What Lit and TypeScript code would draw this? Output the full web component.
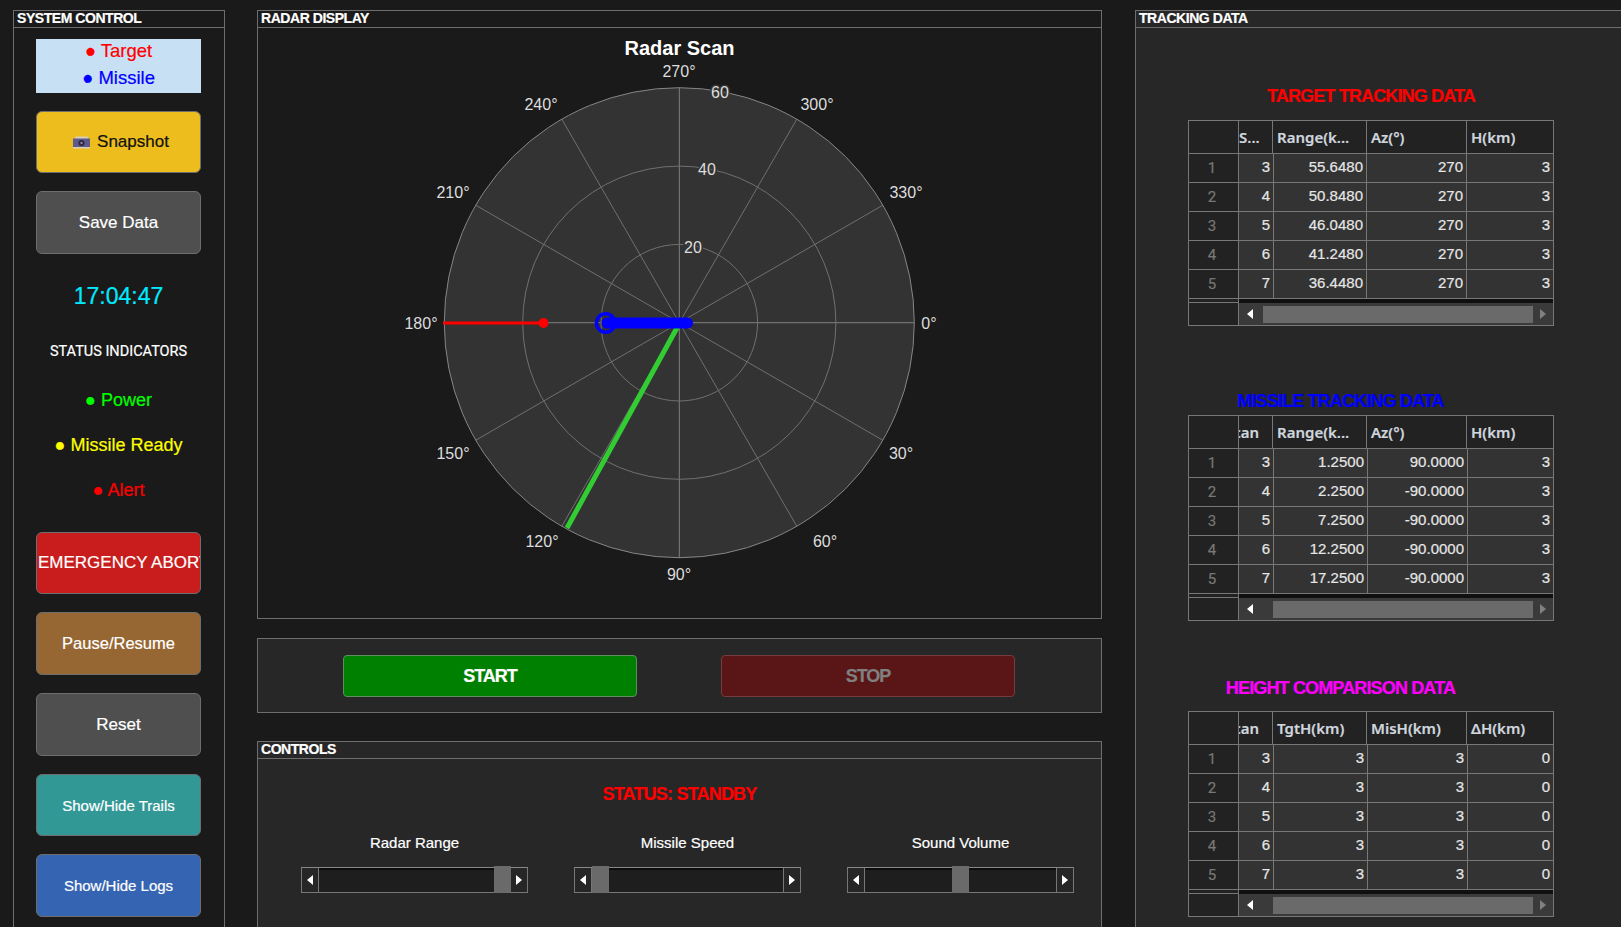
import { LitElement, html, css, svg } from "lit";
import { customElement } from "lit/decorators.js";

const SANS = css`"Liberation Sans", Arial, sans-serif`;

interface TableData {
  cls: string;
  title: string;
  head: string[];
  clipScan: boolean;
  rows: string[][];
}

const SCANS = ["3", "4", "5", "6", "7"];

const TABLES: TableData[] = [
  {
    cls: "target",
    title: "TARGET TRACKING DATA",
    head: ["S...", "Range(k...", "Az(°)", "H(km)"],
    clipScan: false,
    rows: [
      ["55.6480", "270", "3"],
      ["50.8480", "270", "3"],
      ["46.0480", "270", "3"],
      ["41.2480", "270", "3"],
      ["36.4480", "270", "3"],
    ],
  },
  {
    cls: "missile",
    title: "MISSILE TRACKING DATA",
    head: ["Scan", "Range(k...", "Az(°)", "H(km)"],
    clipScan: true,
    rows: [
      ["1.2500", "90.0000", "3"],
      ["2.2500", "-90.0000", "3"],
      ["7.2500", "-90.0000", "3"],
      ["12.2500", "-90.0000", "3"],
      ["17.2500", "-90.0000", "3"],
    ],
  },
  {
    cls: "height",
    title: "HEIGHT COMPARISON DATA",
    head: ["Scan", "TgtH(km)", "MisH(km)", "ΔH(km)"],
    clipScan: true,
    rows: [
      ["3", "3", "0"],
      ["3", "3", "0"],
      ["3", "3", "0"],
      ["3", "3", "0"],
      ["3", "3", "0"],
    ],
  },
];

const SLIDERS = [
  { label: "Radar Range", pos: 175 },
  { label: "Missile Speed", pos: 0 },
  { label: "Sound Volume", pos: 87 },
];

// page coordinates, the svg viewBox is the panel's inner box
const CX = 679.3;
const CY = 322.7;
const RINGS = [78.3, 156.6];
const OUTER = 235;

const ANGLE_LABELS: [string, number, number][] = [
  ["270°", 679, 71],
  ["240°", 541, 104],
  ["300°", 817, 104],
  ["210°", 453, 192],
  ["330°", 906, 192],
  ["180°", 421, 323],
  ["0°", 929, 323],
  ["150°", 453, 453],
  ["30°", 901, 453],
  ["120°", 542, 541],
  ["60°", 825, 541],
  ["90°", 679, 574],
];

const RANGE_LABELS: [string, number, number][] = [
  ["20", 693, 247],
  ["40", 707, 169],
  ["60", 720, 92],
];

@customElement("app-root")
export class AppRoot extends LitElement {
  static styles = css`
    :host {
      display: block;
      height: 927px;
      overflow: hidden;
      background: #1a1a1a;
      font-family: ${SANS};
      color: #fff;
      -webkit-text-stroke: 0.2px;
    }
    .page {
      display: flex;
      gap: 32px;
      width: 1750px;
      height: 1000px;
      padding: 10px 0 0 13px;
      box-sizing: border-box;
    }
    .panel {
      flex: none;
      border: 1px solid #6e6e6e;
      box-sizing: border-box;
    }
    .panel-title {
      height: 16px;
      line-height: 15px;
      padding-left: 3px;
      border-bottom: 1px solid #6e6e6e;
      font-size: 14px;
      font-weight: 700;
      letter-spacing: -0.45px;
      white-space: nowrap;
    }
    .dark {
      background: #272727;
    }

    /* sidebar */
    .side {
      width: 212px;
      padding-right: 1px;
      display: flex;
      flex-direction: column;
      align-items: center;
    }
    .side .panel-title {
      align-self: stretch;
      margin-right: -1px;
    }
    .legend {
      width: 165px;
      height: 54px;
      margin-top: 11px;
      background: #c8e0f4;
      font-size: 18.5px;
      line-height: 27px;
      text-align: center;
    }
    .legend div {
      position: relative;
      top: -2px;
    }
    .red {
      color: #f00;
    }
    .blue {
      color: #00f;
    }
    .side-btn {
      width: 165px;
      height: 63px;
      margin-top: 18px;
      padding: 0 1px;
      box-sizing: border-box;
      display: flex;
      align-items: center;
      justify-content: center;
      gap: 7px;
      border: 1px solid #6e6e6e;
      border-radius: 6px;
      font: 17px ${SANS};
      color: #fff;
      white-space: nowrap;
      overflow: hidden;
    }
    .snapshot {
      height: 62px;
      padding-left: 6px;
      background: #ecbd1c;
      color: #111;
    }
    .grey {
      background: #4f4f4f;
    }
    .abort {
      height: 62px;
      margin-top: 0;
      background: #c91c1c;
      justify-content: flex-start;
    }
    .abort span {
      flex: none;
    }
    .pause {
      background: #966733;
      font-size: 16.5px;
    }
    .trails {
      height: 62px;
      background: #329896;
      font-size: 15px;
    }
    .logs {
      background: #3565b2;
      font-size: 15px;
    }
    .clock {
      height: 48px;
      line-height: 48px;
      margin-top: 18px;
      color: #00eaff;
      font-size: 23px;
    }
    .status-head {
      height: 26px;
      margin-top: 19px;
      font: 14.5px / 26px Roboto, sans-serif;
    }
    .indicators {
      margin-top: 13px;
      margin-bottom: 19px;
      text-align: center;
      font-size: 18px;
      line-height: 45px;
    }
    .green {
      color: #0f0;
    }
    .yellow {
      color: #ff0;
    }

    /* middle column */
    .middle {
      flex: none;
      width: 845px;
      margin-right: 1px;
      display: flex;
      flex-direction: column;
    }
    .radar {
      height: 609px;
    }
    .radar svg {
      display: block;
      -webkit-text-stroke: 0;
    }
    .chart-title {
      font: 700 20px ${SANS};
      fill: #fff;
      text-anchor: middle;
    }
    .angle,
    .range {
      font: 16px ${SANS};
      fill: #ddd;
      text-anchor: middle;
      dominant-baseline: central;
    }
    .range {
      paint-order: stroke;
      stroke: #333;
      stroke-width: 3px;
    }
    .disc {
      fill: #333;
    }
    .grid {
      fill: none;
      stroke: #707070;
      stroke-width: 1;
    }
    .axis {
      stroke: #808080;
    }
    .rim {
      fill: none;
      stroke: #868686;
      stroke-width: 1;
    }
    .run-bar {
      height: 75px;
      margin-top: 19px;
      padding: 16px 86px 0 85px;
      display: flex;
      justify-content: space-between;
    }
    .run-btn {
      width: 294px;
      height: 42px;
      box-sizing: border-box;
      display: flex;
      align-items: center;
      justify-content: center;
      border-radius: 4px;
      font-size: 18px;
      font-weight: 700;
      letter-spacing: -1px;
    }
    .start {
      background: #008000;
      border: 1px solid #5f8f5f;
      color: #fff;
    }
    .stop {
      background: #5a1616;
      border: 1px solid #743c3c;
      color: #808080;
    }
    .controls {
      flex: 1;
      margin-top: 28px;
    }
    .status {
      margin-top: 24px;
      height: 24px;
      line-height: 23px;
      text-align: center;
      color: #f00;
      font-size: 18px;
      font-weight: 700;
      letter-spacing: -0.8px;
    }
    .slider-row {
      display: grid;
      grid-template-columns: repeat(3, 227px);
      column-gap: 46px;
      padding: 26px 0 0 43px;
    }
    .slider-label {
      height: 19px;
      line-height: 20px;
      overflow: hidden;
      text-align: center;
      font-size: 15px;
    }
    .slider {
      position: relative;
      height: 26px;
      margin-top: 15px;
      display: flex;
      justify-content: space-between;
      box-sizing: border-box;
      border: 1px solid #777;
      border-top-color: #888;
      background: #1e1e1e;
      box-shadow: inset 0 2px 0 #0c0c0c;
    }
    .slider-end {
      width: 16px;
      display: flex;
      align-items: center;
      justify-content: center;
      background: #262626;
      border-right: 1px solid #777;
    }
    .slider-end.right {
      border-right: 0;
      border-left: 1px solid #777;
    }
    .thumb {
      position: absolute;
      top: -2px;
      bottom: -1px;
      width: 17px;
      margin-left: 17px;
      background: #6a6a6a;
    }
    .arrow-l,
    .arrow-r {
      width: 0;
      height: 0;
      border-top: 5px solid transparent;
      border-bottom: 5px solid transparent;
    }
    .arrow-l {
      border-right: 6px solid #fff;
    }
    .arrow-r {
      border-left: 6px solid #fff;
    }
    .arrow-r.dim {
      border-left-color: #808080;
    }

    /* tracking column */
    .tracking {
      width: 600px;
    }
    .table-title {
      height: 24px;
      line-height: 26px;
      width: 366px;
      margin-left: 52px;
      text-align: center;
      font-size: 18px;
      font-weight: 700;
      letter-spacing: -0.85px;
      white-space: nowrap;
    }
    .table-title.target {
      margin-top: 55px;
      color: #f00;
    }
    .table-title.missile {
      margin-top: 62px;
      padding-right: 61px;
      box-sizing: border-box;
      color: #00f;
    }
    .table-title.height {
      margin-top: 54px;
      padding-right: 61px;
      box-sizing: border-box;
      color: #f0f;
    }
    .table {
      width: 366px;
      margin-left: 52px;
      box-sizing: border-box;
      border: 1px solid #777;
      background: #333;
    }
    .table.target {
      margin-top: 13px;
    }
    .table.missile {
      margin-top: 3px;
    }
    .table.height {
      margin-top: 12px;
    }
    .thead,
    .trow {
      display: grid;
      border-bottom: 1px solid #777;
      box-sizing: border-box;
    }
    .thead {
      grid-template-columns: 50px 34px 94px 100px 1fr;
      height: 33px;
      background: #222;
    }
    .trow {
      grid-template-columns: 50px 35px 94px 100px 1fr;
      height: 29px;
    }
    .target .trow {
      grid-template-columns: 50px 35px 93px 100px 1fr;
    }
    .th {
      border-right: 1px solid #777;
      padding-left: 4px;
      overflow: hidden;
      white-space: nowrap;
      font: 600 15px / 32px "Noto Sans", sans-serif;
      color: #cfd6de;
    }
    .th:last-child {
      border-right: 0;
    }
    .th.flush {
      padding-left: 0;
    }
    .th.clip {
      padding-left: 0;
      text-indent: -14px;
    }
    .corner {
      padding: 0;
    }
    .td {
      border-right: 1px solid #777;
      padding-right: 3px;
      text-align: right;
      font-size: 15px;
      line-height: 26px;
      color: #e6e6e6;
    }
    .td:last-child {
      border-right: 0;
    }
    .num {
      border-right: 1px solid #777;
      padding-right: 3px;
      background: #222;
      text-align: center;
      font: 15px / 28px Roboto, sans-serif;
      color: #777;
    }
    .band {
      display: flex;
      height: 4px;
    }
    .band-left {
      width: 50px;
      box-sizing: border-box;
      background: #222;
      border-right: 1px solid #777;
      border-bottom: 1px solid #777;
    }
    .band-main {
      flex: 1;
      background: #101010;
    }
    .hscroll {
      display: flex;
      height: 22px;
    }
    .hscroll-left {
      width: 50px;
      box-sizing: border-box;
      background: #222;
      border-right: 1px solid #777;
    }
    .hscroll-main {
      flex: 1;
      display: flex;
      align-items: center;
      background: #3a3a3a;
    }
    .hscroll-btn {
      width: 20px;
      flex: none;
      display: flex;
      align-items: center;
      justify-content: center;
    }
    .hscroll-btn.first {
      width: 24px;
      padding-right: 3px;
      box-sizing: border-box;
    }
    .hscroll-thumb {
      flex: 1;
      height: 17px;
      background: #6a6a6a;
    }
    .missile .hscroll-thumb,
    .height .hscroll-thumb {
      margin-left: 10px;
    }
  `;

  private renderRadar() {
    const spokes = [0, 30, 60, 90, 120, 150, 180, 210, 240, 270, 300, 330].map((deg) => {
      const rad = (deg * Math.PI) / 180;
      const cls = deg % 90 === 0 ? "grid axis" : "grid";
      return svg`<line class=${cls} x1=${CX} y1=${CY} x2=${CX + OUTER * Math.cos(rad)} y2=${CY + OUTER * Math.sin(rad)}></line>`;
    });
    return html`<svg width="843" height="580" viewBox="258 28 843 580">
      <text class="chart-title" x="679.5" y="55">Radar Scan</text>
      <circle class="disc" cx=${CX} cy=${CY} r=${OUTER}></circle>
      ${spokes}
      ${RINGS.map((r) => svg`<circle class="grid" cx=${CX} cy=${CY} r=${r}></circle>`)}
      <circle class="rim" cx=${CX} cy=${CY} r=${OUTER}></circle>
      ${ANGLE_LABELS.map(([t, x, y]) => svg`<text class="angle" x=${x} y=${y}>${t}</text>`)}
      ${RANGE_LABELS.map(([t, x, y]) => svg`<text class="range" x=${x} y=${y}>${t}</text>`)}
      <line x1="678" y1="326" x2="567" y2="528" stroke="#32cd32" stroke-width="5"></line>
      <line x1="443" y1="323" x2="543.5" y2="323" stroke="#f00" stroke-width="3"></line>
      <circle cx="543.5" cy="323" r="5" fill="#f00"></circle>
      <line x1="607" y1="323" x2="687.5" y2="323" stroke="#00f" stroke-width="11" stroke-linecap="round"></line>
      <circle cx="605.7" cy="323" r="9.25" fill="none" stroke="#00f" stroke-width="3.5"></circle>
    </svg>`;
  }

  private renderCamera() {
    return html`<svg width="17" height="13" viewBox="0 0 17 13">
      <rect x="2" y="0.5" width="13" height="3" rx="1" fill="#d8d0b4"></rect>
      <rect x="0" y="2.5" width="17" height="9" fill="#5f5a8e"></rect>
      <rect x="0" y="11" width="17" height="1.5" fill="#d8d0b4"></rect>
      <circle cx="8.5" cy="7" r="3" fill="#2c2838"></circle>
      <circle cx="8.5" cy="7" r="1.2" fill="#8a84b0"></circle>
    </svg>`;
  }

  private renderTable(t: TableData) {
    return html`
      <div class="table-title ${t.cls}">${t.title}</div>
      <div class="table ${t.cls}">
        <div class="thead">
          <div class="th corner"></div>
          <div class="th ${t.clipScan ? "clip" : "flush"}">${t.head[0]}</div>
          <div class="th">${t.head[1]}</div>
          <div class="th">${t.head[2]}</div>
          <div class="th">${t.head[3]}</div>
        </div>
        ${t.rows.map(
          (row, i) => html`<div class="trow">
            <div class="num">${i + 1}</div>
            <div class="td">${SCANS[i]}</div>
            ${row.map((v) => html`<div class="td">${v}</div>`)}
          </div>`,
        )}
        <div class="band"><div class="band-left"></div><div class="band-main"></div></div>
        <div class="hscroll">
          <div class="hscroll-left"></div>
          <div class="hscroll-main">
            <div class="hscroll-btn first"><div class="arrow-l"></div></div>
            <div class="hscroll-thumb"></div>
            <div class="hscroll-btn"><div class="arrow-r dim"></div></div>
          </div>
        </div>
      </div>
    `;
  }

  render() {
    return html`<div class="page">
      <section class="panel side">
        <div class="panel-title">SYSTEM CONTROL</div>
        <div class="legend">
          <div class="red">● Target</div>
          <div class="blue">● Missile</div>
        </div>
        <div class="side-btn snapshot">${this.renderCamera()}<span>Snapshot</span></div>
        <div class="side-btn grey">Save Data</div>
        <div class="clock">17:04:47</div>
        <div class="status-head">STATUS INDICATORS</div>
        <div class="indicators">
          <div class="green">● Power</div>
          <div class="yellow">● Missile Ready</div>
          <div class="red">● Alert</div>
        </div>
        <div class="side-btn abort"><span>EMERGENCY ABORT</span></div>
        <div class="side-btn pause">Pause/Resume</div>
        <div class="side-btn grey">Reset</div>
        <div class="side-btn trails">Show/Hide Trails</div>
        <div class="side-btn logs">Show/Hide Logs</div>
      </section>

      <div class="middle">
        <section class="panel radar">
          <div class="panel-title">RADAR DISPLAY</div>
          ${this.renderRadar()}
        </section>
        <section class="panel dark run-bar">
          <div class="run-btn start">START</div>
          <div class="run-btn stop">STOP</div>
        </section>
        <section class="panel dark controls">
          <div class="panel-title">CONTROLS</div>
          <div class="status">STATUS: STANDBY</div>
          <div class="slider-row">
            ${SLIDERS.map(
              (s) => html`<div>
                <div class="slider-label">${s.label}</div>
                <div class="slider">
                  <div class="slider-end"><div class="arrow-l"></div></div>
                  <div class="thumb" style="left: ${s.pos}px"></div>
                  <div class="slider-end right"><div class="arrow-r"></div></div>
                </div>
              </div>`,
            )}
          </div>
        </section>
      </div>

      <section class="panel dark tracking">
        <div class="panel-title">TRACKING DATA</div>
        ${TABLES.map((t) => this.renderTable(t))}
      </section>
    </div>`;
  }
}
